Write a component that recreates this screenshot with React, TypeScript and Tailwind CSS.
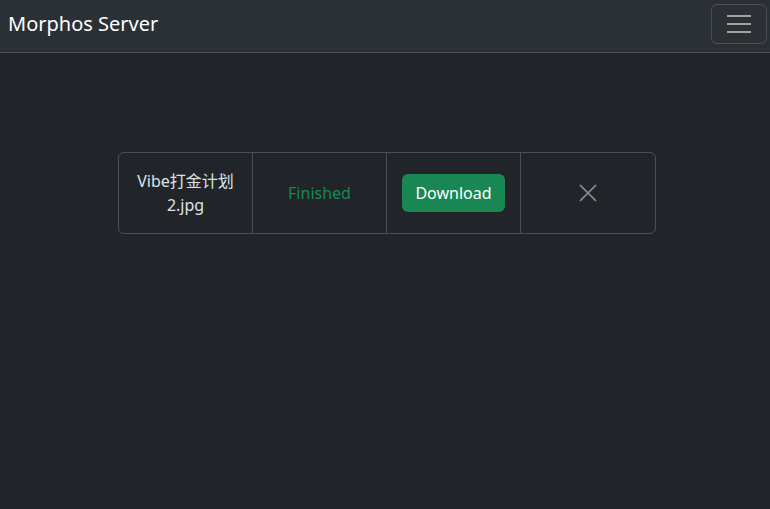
import { X } from 'lucide-react';

const cell = 'flex w-[134px] items-center justify-center px-2 text-center';

const App = () => {
  return (
    <div
      className="min-h-[509px] bg-[#212529] text-[#dee2e6]"
      style={{ fontFamily: '"Noto Sans", "Noto Sans CJK SC", sans-serif' }}
    >
      <nav className="flex h-[53px] items-center justify-between border-b border-[#495057] bg-[#2b3035] pb-[4px] pl-2 pr-[3px]">
        <span className="text-[20px] leading-none text-white">Morphos Server</span>
        <button className="flex h-[40px] w-[56px] flex-col items-center justify-center gap-[6px] rounded-[6px] border border-white/15">
          <span className="block h-[2px] w-[24px] bg-[#a0a3a6]" />
          <span className="block h-[2px] w-[24px] bg-[#a0a3a6]" />
          <span className="block h-[2px] w-[24px] bg-[#a0a3a6]" />
        </button>
      </nav>

      <div className="flex justify-center pt-[99px] pl-[4px]">
        <div className="flex h-[82px] divide-x divide-[#495057] rounded-[6px] border border-[#495057]">
          <div className={cell + ' text-[16px] leading-[24px]'}>Vibe打金计划 2.jpg</div>
          <div className={cell + ' text-[16px] text-[#198754]'}>Finished</div>
          <div className={cell}>
            <button className="h-[38px] rounded-[6px] bg-[#198754] px-[13px] text-[16px] text-white">Download</button>
          </div>
          <div className={cell}>
            <X size={30} strokeWidth={1.4} className="text-[#8a8e92]" />
          </div>
        </div>
      </div>
    </div>
  );
};

export default App;
